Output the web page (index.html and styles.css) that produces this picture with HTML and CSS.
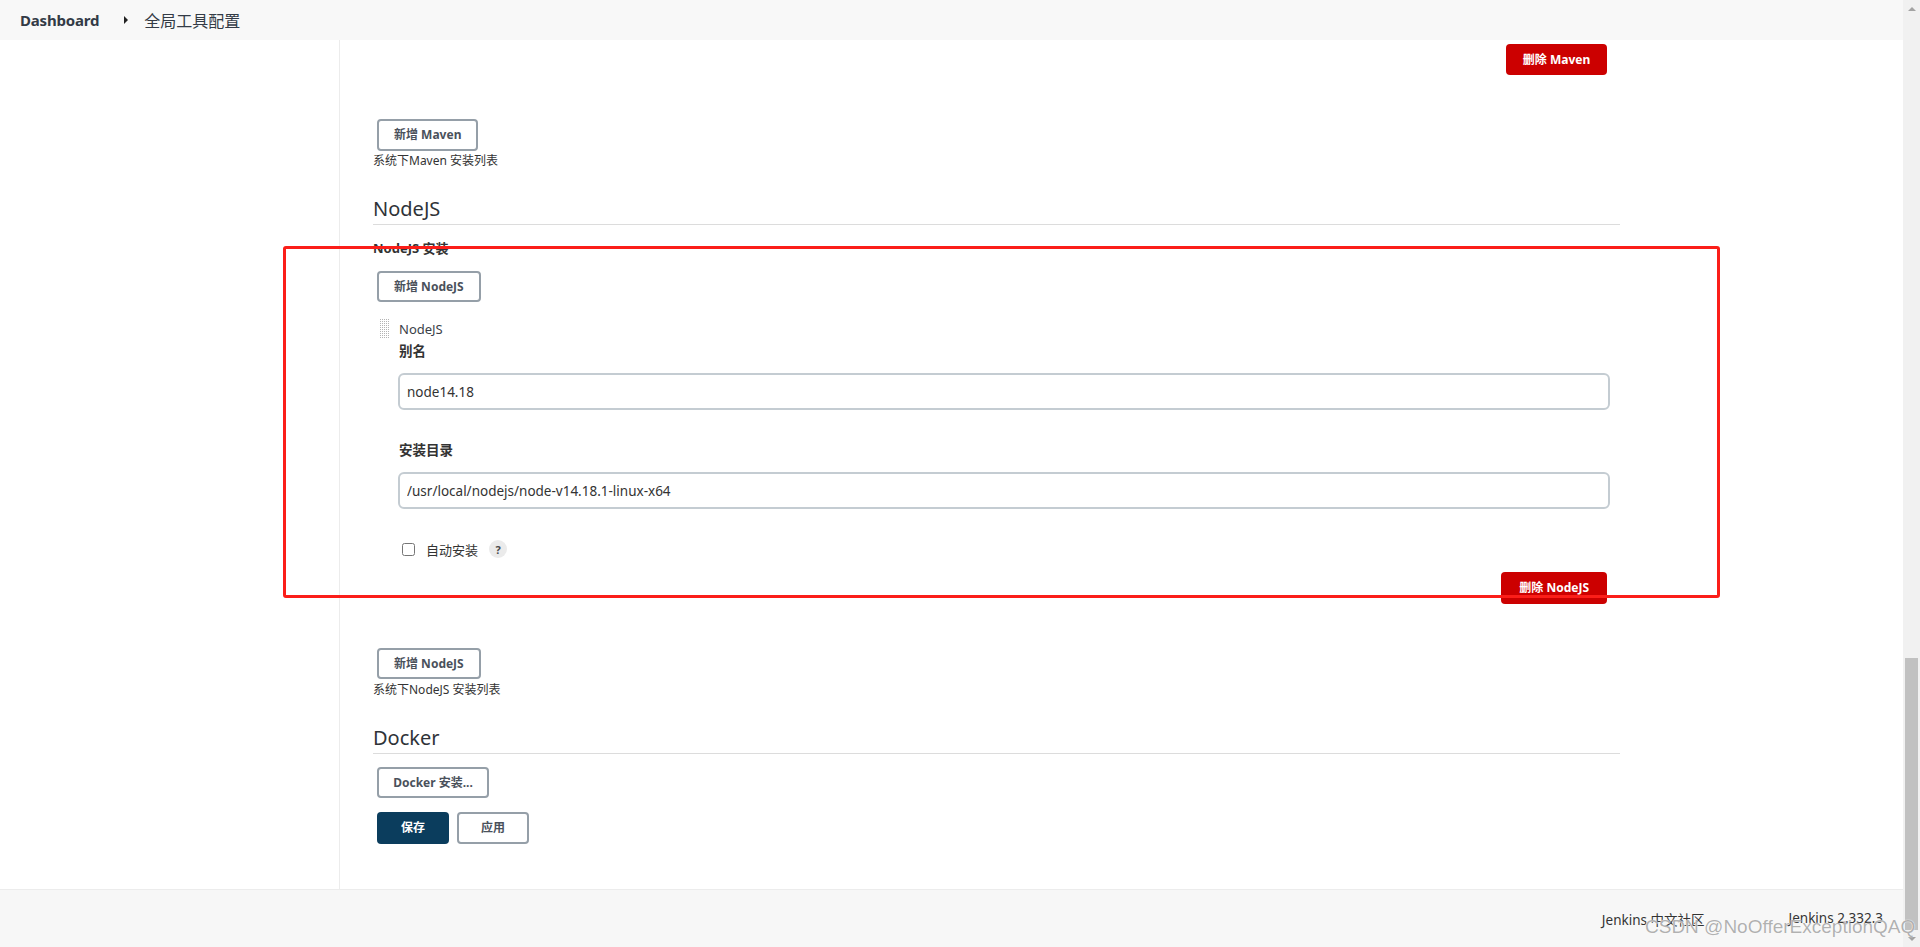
FILE: index.html
```html
<!DOCTYPE html>
<html lang="zh-CN">
<head>
<meta charset="utf-8">
<title>全局工具配置 [Jenkins]</title>
<link rel="stylesheet" href="styles.css">
</head>
<body>
<div class="app">
  <div class="page">
    <header class="breadcrumb">
      <a class="crumb crumb-root">Dashboard</a>
      <span class="crumb-arrow"></span>
      <span class="crumb crumb-current">全局工具配置</span>
    </header>
    <div class="main">
      <aside class="side"></aside>
      <div class="content">
        <div class="del-row">
          <button class="btn btn-danger btn-danger-maven">删除 Maven</button>
        </div>
        <button class="btn btn-outline btn-add">新增 Maven</button>
        <div class="hint">系统下Maven 安装列表</div>

        <h2 class="section-title">NodeJS</h2>
        <div class="sub-label">NodeJS 安装</div>
        <button class="btn btn-outline btn-add btn-add-first">新增 NodeJS</button>

        <div class="repeat">
          <div class="repeat-head">
            <span class="handle"></span>
            <span class="repeat-name">NodeJS</span>
          </div>
          <div class="fields">
            <div class="field-label">别名</div>
            <input class="text-input" type="text" value="node14.18">
            <div class="field-label field-label-gap">安装目录</div>
            <input class="text-input" type="text" value="/usr/local/nodejs/node-v14.18.1-linux-x64">
            <div class="check-row">
              <input class="check" type="checkbox">
              <span class="check-label">自动安装</span>
              <span class="help">?</span>
            </div>
          </div>
          <div class="del-row del-row-item">
            <button class="btn btn-danger">删除 NodeJS</button>
          </div>
        </div>

        <button class="btn btn-outline btn-add btn-add-last">新增 NodeJS</button>
        <div class="hint hint-last">系统下NodeJS 安装列表</div>

        <h2 class="section-title">Docker</h2>
        <button class="btn btn-outline btn-add btn-docker">Docker 安装...</button>

        <div class="actions">
          <button class="btn btn-primary">保存</button>
          <button class="btn btn-outline btn-apply">应用</button>
        </div>
      </div>
    </div>
    <footer class="footer">
      <a class="footer-link">Jenkins 中文社区</a>
      <a class="footer-link">Jenkins 2.332.3</a>
    </footer>
  </div>
  <div class="scrollbar">
    <span class="sb-arrow sb-up"></span>
    <span class="sb-track"><span class="sb-thumb"></span></span>
    <span class="sb-arrow sb-down"></span>
  </div>
  <div class="annot"></div>
  <div class="watermark">CSDN @NoOfferExceptionQAQ</div>
</div>
</body>
</html>
```

FILE: styles.css
```css
* { box-sizing: border-box; }
html, body { margin: 0; padding: 0; }
body {
  font-family: "Noto Sans", "Noto Sans CJK SC", sans-serif;
  color: #333;
  background: #fff;
  font-size: 13px;
}
.app {
  position: relative;
  display: flex;
  width: 1920px;
  height: 947px;
  overflow: hidden;
}
.page {
  flex: 1;
  display: flex;
  flex-direction: column;
  min-width: 0;
}

/* breadcrumb */
.breadcrumb {
  height: 40px;
  background: #f8f8f8;
  display: flex;
  align-items: center;
  padding-left: 20px;
  flex-shrink: 0;
}
.crumb-root {
  font-weight: 700;
  font-size: 15px;
  color: #333b46;
  letter-spacing: -0.2px;
}
.crumb-arrow {
  width: 0;
  height: 0;
  border-top: 4px solid transparent;
  border-bottom: 4px solid transparent;
  border-left: 4px solid #222;
  margin-left: 25px;
  margin-right: 16px;
}
.crumb-current {
  font-size: 16px;
  color: #333b46;
}

/* main */
.main {
  display: flex;
  height: 849px;
  flex-shrink: 0;
}
.side {
  width: 340px;
  border-right: 1px solid #ececec;
  flex-shrink: 0;
}
.content {
  width: 1247px;
  margin-left: 33px;
  display: flex;
  flex-direction: column;
  align-items: flex-start;
  padding-top: 4px;
}

/* buttons */
.btn {
  font-family: "Noto Sans", "Noto Sans CJK SC", sans-serif;
  font-size: 12px;
  font-weight: 700;
  height: 31px;
  border-radius: 4px;
  padding: 0 15px;
  cursor: pointer;
  line-height: 1;
}
.btn-outline {
  background: #fff;
  border: 2px solid #959fa8;
  color: #4a515b;
}
.btn-danger {
  background: #cc0000;
  border: none;
  color: #fff;
  height: 32px;
  padding: 0 18px;
}
.btn-danger-maven {
  height: 31px;
  width: 101px;
  padding: 0;
}
.btn-primary {
  background: #0b3d5d;
  border: none;
  color: #fff;
  width: 72px;
  height: 32px;
  padding: 0;
}
.btn-apply {
  width: 72px;
  height: 32px;
  margin-left: 8px;
  padding: 0;
}

.del-row {
  align-self: stretch;
  display: flex;
  justify-content: flex-end;
  padding-right: 13px;
}
.btn-add {
  margin-left: 4px;
  margin-top: 44px;
  height: 32px;
}
.btn-add-first { margin-top: 14px; height: 31px; }
.btn-add-last { margin-top: 44px; height: 31px; }
.btn-docker { margin-top: 13px; height: 31px; width: 112px; padding: 0; }

.hint {
  font-size: 12px;
  line-height: 18px;
  margin-top: 1px;
  color: #333;
}
.hint-last { margin-top: 2px; }

.section-title {
  align-self: stretch;
  margin: 25px 0 0 0;
  font-size: 20px;
  font-weight: 400;
  line-height: 28px;
  padding-bottom: 1px;
  border-bottom: 1px solid #dcdcdc;
  color: #2f3338;
}
.sub-label {
  margin-top: 14px;
  font-size: 13px;
  font-weight: 700;
  line-height: 18px;
}

/* repeated item */
.repeat {
  align-self: stretch;
  margin-top: 17px;
}
.repeat-head {
  display: flex;
  align-items: center;
  height: 20px;
}
.handle {
  width: 11px;
  height: 20px;
  margin-left: 6px;
  background-image: repeating-conic-gradient(#b4b4b4 0 25%, #ffffff 0 100%);
  background-size: 2px 2px;
}
.repeat-name {
  margin-left: 9px;
  font-size: 13px;
  color: #3a3f48;
}
.fields {
  padding-left: 25px;
  padding-right: 10px;
  display: flex;
  flex-direction: column;
}
.field-label {
  margin-top: 3px;
  padding-left: 1px;
  font-size: 13.5px;
  font-weight: 700;
  line-height: 18px;
}
.field-label-gap { margin-top: 31px; }
.text-input {
  margin-top: 13px;
  height: 37px;
  width: 100%;
  border: 2px solid #c4ccd2;
  border-radius: 6px;
  padding: 0 7px;
  font-family: "Noto Sans", "Noto Sans CJK SC", sans-serif;
  font-size: 13.5px;
  color: #333;
  background: #fff;
  outline: none;
}
.check-row {
  margin-top: 30px;
  height: 20px;
  display: flex;
  align-items: center;
  padding-left: 4px;
}
.check {
  margin: 0;
  width: 13px;
  height: 13px;
}
.check-label {
  margin-left: 11px;
  font-size: 13px;
}
.help {
  margin-left: 11px;
  width: 18px;
  height: 18px;
  border-radius: 50%;
  background: #ebebeb;
  color: #4a4a4a;
  font-size: 11px;
  font-weight: 700;
  display: flex;
  align-items: center;
  justify-content: center;
}
.del-row-item { margin-top: 13px; }

.actions {
  margin-top: 14px;
  margin-left: 4px;
  display: flex;
}

/* footer */
.footer {
  flex: 1;
  background: #f7f7f7;
  border-top: 1px solid #ececec;
  display: flex;
  justify-content: flex-end;
  align-items: flex-start;
  padding-top: 19px;
  padding-right: 20px;
  font-size: 13.5px;
  gap: 84px;
}
.footer-link { color: #333; }

/* fake scrollbar */
.scrollbar {
  width: 17px;
  flex-shrink: 0;
  background: #f1f1f1;
  display: flex;
  flex-direction: column;
}
.sb-arrow {
  height: 17px;
  display: flex;
  align-items: center;
  justify-content: center;
}
.sb-up::before {
  content: "";
  border-left: 4px solid transparent;
  border-right: 4px solid transparent;
  border-bottom: 4px solid #a3a3a3;
}
.sb-down::before {
  content: "";
  border-left: 4px solid transparent;
  border-right: 4px solid transparent;
  border-top: 4px solid #a3a3a3;
}
.sb-track {
  flex: 1;
  display: flex;
  flex-direction: column;
  justify-content: flex-end;
  padding: 0 2px;
}
.sb-thumb {
  height: 272px;
  background: #c1c1c1;
}

/* overlays */
.annot {
  position: absolute;
  left: 283px;
  top: 246px;
  width: 1437px;
  height: 352px;
  border: 3px solid #fb1e19;
  border-radius: 3px;
  pointer-events: none;
}
.watermark {
  position: absolute;
  left: 1645px;
  top: 915px;
  font-family: "Liberation Sans", "Noto Sans", sans-serif;
  font-size: 19px;
  line-height: 24px;
  color: rgba(110, 110, 110, 0.55);
  text-shadow: 0 0 1px #fff, 0 0 1px #fff;
  white-space: nowrap;
  pointer-events: none;
}
```
